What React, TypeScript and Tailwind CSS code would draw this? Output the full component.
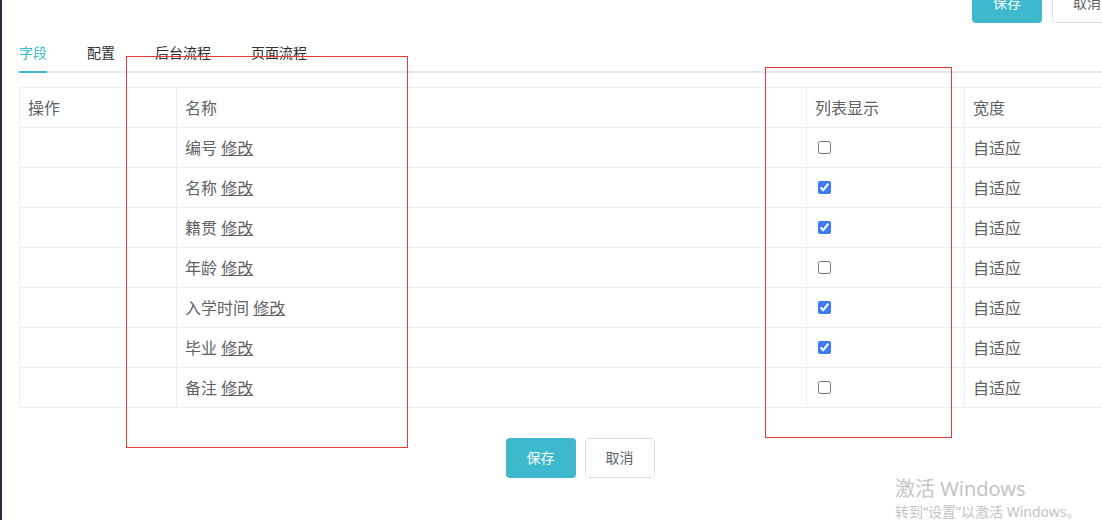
import { useState } from "react";

type Field = {
  name: string;
  visible: boolean;
};

const initialFields: Field[] = [
  { name: "编号", visible: false },
  { name: "名称", visible: true },
  { name: "籍贯", visible: true },
  { name: "年龄", visible: false },
  { name: "入学时间", visible: true },
  { name: "毕业", visible: true },
  { name: "备注", visible: false },
];

const tabs = ["字段", "配置", "后台流程", "页面流程"];

export default function App() {
  const [fields, setFields] = useState(initialFields);
  const [tab, setTab] = useState(0);

  const toggle = (i: number) =>
    setFields((prev) =>
      prev.map((f, idx) => (idx === i ? { ...f, visible: !f.visible } : f)),
    );

  return (
    <div
      className="relative flex h-[520px] w-[1102px] overflow-hidden bg-white text-[#606266]"
      style={{ fontFamily: '"Noto Sans", "Noto Sans CJK SC", sans-serif' }}
    >
      <div className="w-[2px] shrink-0 bg-[#1f2d3d]" />

      <div className="w-[1123px] shrink-0 pl-[17px]">
        {/* top action bar, scrolled partly out of view */}
        <div className="-mt-[17px] flex justify-end gap-[10px] pr-[3px]">
          <button
            type="button"
            className="h-10 w-[70px] rounded bg-[#3db8cc] text-sm text-white"
          >
            保存
          </button>
          <button
            type="button"
            className="h-10 w-[70px] rounded border border-[#dcdfe6] bg-white text-sm text-[#606266]"
          >
            取消
          </button>
        </div>

        {/* tabs */}
        <div className="mt-[10px] flex h-10 border-b-2 border-[#e4e7ed]">
          {tabs.map((t, i) => (
            <button
              key={t}
              type="button"
              onClick={() => setTab(i)}
              className={`relative -mb-[2px] h-10 text-sm leading-10 ${
                i === 0 ? "pr-5" : "px-5"
              } ${i === tabs.length - 1 ? "pr-0" : ""} ${
                tab === i ? "text-[#3db8cc]" : "text-[#303133]"
              }`}
            >
              {t}
              {tab === i && (
                <span
                  className={`absolute bottom-0 h-[2px] bg-[#3db8cc] ${
                    i === 0 ? "left-0 right-5" : "left-5 right-5"
                  }`}
                />
              )}
            </button>
          ))}
        </div>

        {/* fields table */}
        <table className="mt-[14px] w-full table-fixed border-collapse text-base">
          <colgroup>
            <col className="w-[157px]" />
            <col className="w-[630px]" />
            <col className="w-[158px]" />
            <col />
          </colgroup>
          <thead>
            <tr className="h-10">
              <th className="border border-[#ebeef5] pl-[8px] text-left font-normal">
                操作
              </th>
              <th className="border border-[#ebeef5] px-[8px] text-left font-normal">
                名称
              </th>
              <th className="border border-[#ebeef5] px-[8px] text-left font-normal">
                列表显示
              </th>
              <th className="border border-[#ebeef5] px-[8px] text-left font-normal">
                宽度
              </th>
            </tr>
          </thead>
          <tbody>
            {fields.map((f, i) => (
              <tr key={f.name} className="h-10">
                <td className="border border-[#ebeef5]" />
                <td className="border border-[#ebeef5] px-[8px]">
                  {f.name} <span className="cursor-pointer underline">修改</span>
                </td>
                <td className="border border-[#ebeef5] px-[11px]">
                  <input
                    type="checkbox"
                    checked={f.visible}
                    onChange={() => toggle(i)}
                    className="block accent-[#3b7cf5]"
                  />
                </td>
                <td className="border border-[#ebeef5] px-[8px]">自适应</td>
              </tr>
            ))}
          </tbody>
        </table>

        {/* bottom actions */}
        <div className="mt-[30px] flex justify-center gap-[9px] pl-[16px]">
          <button
            type="button"
            className="h-10 w-[70px] rounded bg-[#3db8cc] text-sm text-white"
          >
            保存
          </button>
          <button
            type="button"
            className="h-10 w-[70px] rounded border border-[#dcdfe6] bg-white text-sm text-[#606266]"
          >
            取消
          </button>
        </div>
      </div>

      {/* annotation boxes drawn over the screenshot */}
      <div className="pointer-events-none absolute left-[126px] top-[56px] h-[392px] w-[282px] border border-[#e53935]" />
      <div className="pointer-events-none absolute left-[765px] top-[67px] h-[371px] w-[187px] border border-[#e53935]" />

      {/* windows activation watermark */}
      <div className="pointer-events-none absolute left-[895px] top-[476px] text-[#c4c4c4]">
        <div className="text-[20px] leading-[26px]">激活 Windows</div>
        <div className="text-sm leading-5">转到“设置”以激活 Windows。</div>
      </div>
    </div>
  );
}
